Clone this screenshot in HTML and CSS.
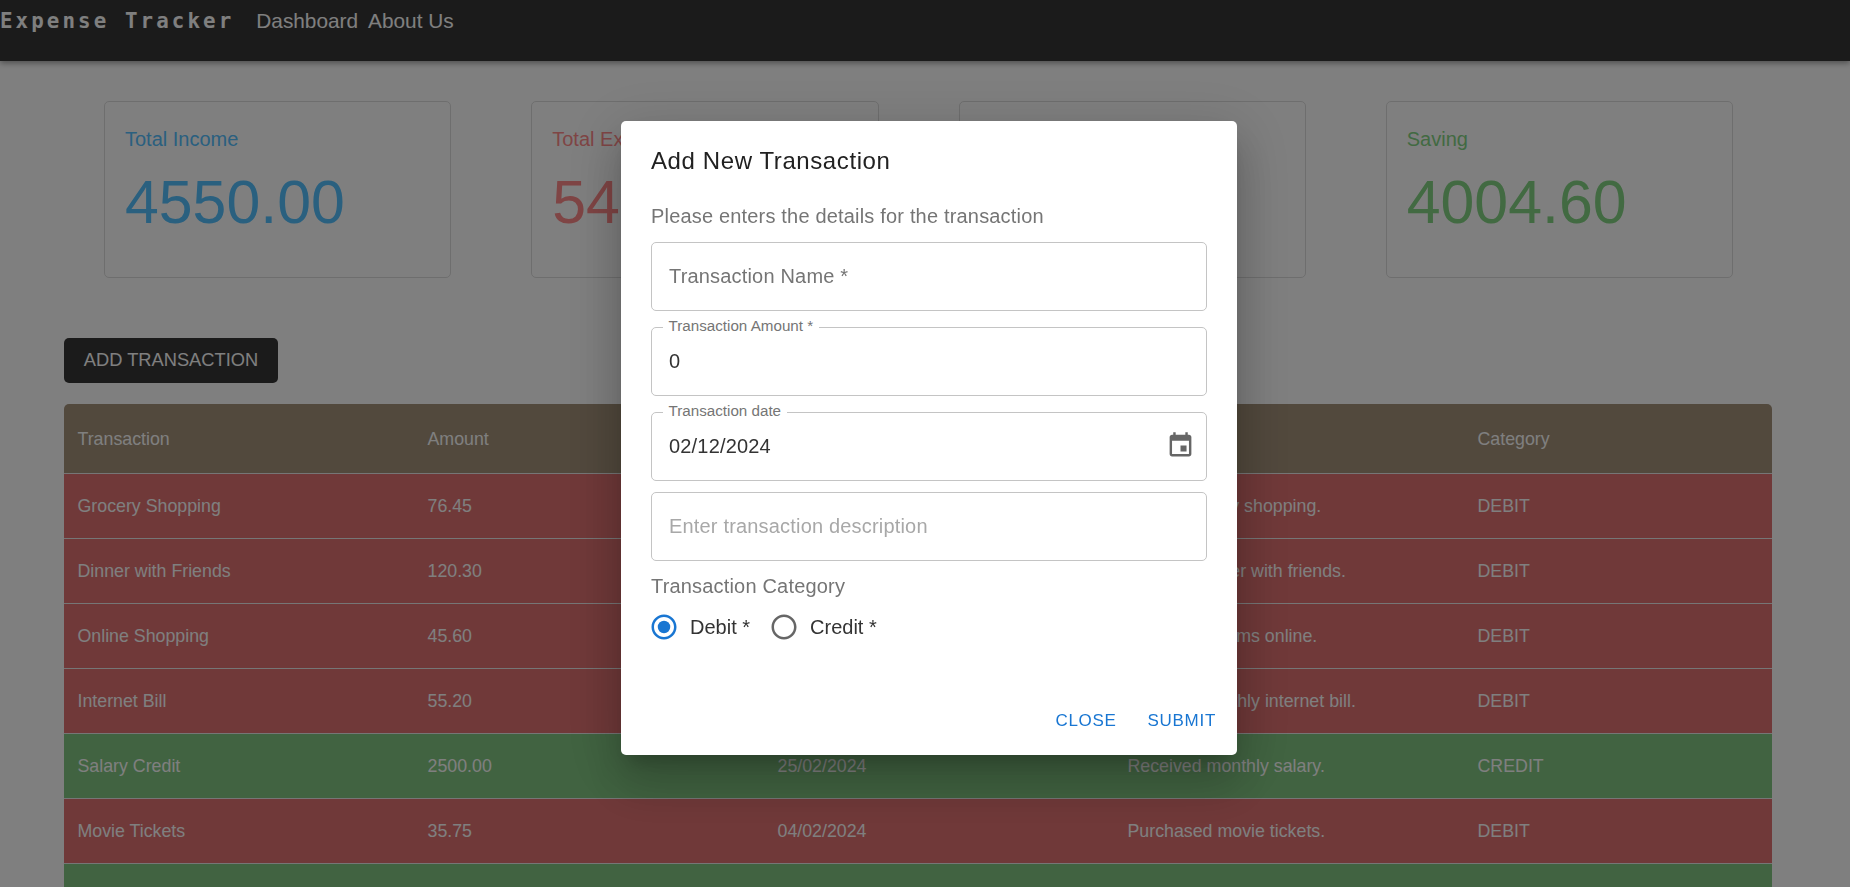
FILE: index.html
```html
<!DOCTYPE html>
<html lang="en">
<head>
    <meta charset="UTF-8">
    <meta name="viewport" content="width=device-width, initial-scale=1.0">
    <link rel="stylesheet" href="styles.css">
    <title>Expense Tracker</title>
</head>
<body>
    <nav class="navbar">
        <span class="brand">Expense Tracker</span>
        <a class="nav-link" href="#">Dashboard</a>
        <a class="nav-link" href="#">About Us</a>
    </nav>

    <section class="cards">
        <div class="card income">
            <div class="card-label">Total Income</div>
            <div class="card-value">4550.00</div>
        </div>
        <div class="card expense">
            <div class="card-label">Total Expense</div>
            <div class="card-value">545.40</div>
        </div>
        <div class="card">
            <div class="card-label">Budget</div>
            <div class="card-value">5000.00</div>
        </div>
        <div class="card saving">
            <div class="card-label">Saving</div>
            <div class="card-value">4004.60</div>
        </div>
    </section>

    <button class="add-btn">ADD TRANSACTION</button>

    <table class="tx-table">
        <thead>
            <tr>
                <th>Transaction</th>
                <th>Amount</th>
                <th>Date</th>
                <th>Description</th>
                <th>Category</th>
            </tr>
        </thead>
        <tbody>
            <tr class="debit"><td>Grocery Shopping</td><td>76.45</td><td>02/02/2024</td><td>Home grocery shopping.</td><td>DEBIT</td></tr>
            <tr class="debit"><td>Dinner with Friends</td><td>120.30</td><td>10/02/2024</td><td>Enjoyed dinner with friends.</td><td>DEBIT</td></tr>
            <tr class="debit"><td>Online Shopping</td><td>45.60</td><td>15/02/2024</td><td>Purchased items online.</td><td>DEBIT</td></tr>
            <tr class="debit"><td>Internet Bill</td><td>55.20</td><td>20/02/2024</td><td>Paid the monthly internet bill.</td><td>DEBIT</td></tr>
            <tr class="credit"><td>Salary Credit</td><td>2500.00</td><td>25/02/2024</td><td>Received monthly salary.</td><td>CREDIT</td></tr>
            <tr class="debit"><td>Movie Tickets</td><td>35.75</td><td>04/02/2024</td><td>Purchased movie tickets.</td><td>DEBIT</td></tr>
            <tr class="credit"><td></td><td></td><td></td><td></td><td></td></tr>
        </tbody>
    </table>

    <div class="backdrop"></div>

    <form class="dialog">
        <h2 class="dialog-title">Add New Transaction</h2>
        <p class="dialog-text">Please enters the details for the transaction</p>

        <div class="field">
            <input type="text" placeholder="Transaction Name *">
        </div>
        <div class="field">
            <label class="float-label">Transaction Amount *</label>
            <input type="text" value="0">
        </div>
        <div class="field">
            <label class="float-label">Transaction date</label>
            <input type="text" value="02/12/2024">
            <svg class="date-icon" viewBox="0 0 24 24"><path d="M17 12h-5v5h5v-5zM16 1v2H8V1H6v2H5c-1.11 0-1.99.9-1.99 2L3 19c0 1.1.89 2 2 2h14c1.1 0 2-.9 2-2V5c0-1.1-.9-2-2-2h-1V1h-2zm3 18H5V8h14v11z"/></svg>
        </div>
        <div class="field field-desc">
            <input class="light" type="text" placeholder="Enter transaction description">
        </div>

        <div class="group-label">Transaction Category</div>
        <div class="radios">
            <label class="radio">
                <svg class="checked" viewBox="0 0 24 24"><path d="M12 2C6.48 2 2 6.48 2 12s4.48 10 10 10 10-4.48 10-10S17.52 2 12 2zm0 18c-4.42 0-8-3.58-8-8s3.58-8 8-8 8 3.58 8 8-3.58 8-8 8z"/><circle cx="12" cy="12" r="5"/></svg>
                Debit *
            </label>
            <label class="radio">
                <svg viewBox="0 0 24 24"><path d="M12 2C6.48 2 2 6.48 2 12s4.48 10 10 10 10-4.48 10-10S17.52 2 12 2zm0 18c-4.42 0-8-3.58-8-8s3.58-8 8-8 8 3.58 8 8-3.58 8-8 8z"/></svg>
                Credit *
            </label>
        </div>

        <div class="dialog-actions">
            <button type="button" class="text-btn">CLOSE</button>
            <button type="button" class="text-btn">SUBMIT</button>
        </div>
    </form>
</body>
</html>
```

FILE: styles.css
```css
html,body{
    height: 100%;
}
body{
    margin: 0;
    background: #fff;
    font-family: "Liberation Sans", Arial, sans-serif;
    overflow: hidden;
}

/* navbar */
.navbar{
    display: flex;
    align-items: flex-start;
    height: 61px;
    box-sizing: border-box;
    padding-top: 8px;
    background: #363636;
    box-shadow: 0 2px 6px rgba(0,0,0,.4);
}
.brand{
    font-family: "DejaVu Sans Mono", monospace;
    font-weight: bold;
    font-size: 20.8px;
    line-height: 26px;
    letter-spacing: 3.1px;
    color: #fff;
    margin-right: 22px;
}
.nav-link{
    font-size: 20.8px;
    line-height: 26px;
    color: #fff;
    text-decoration: none;
    margin-right: 10px;
}

/* summary cards */
.cards{
    display: flex;
    gap: 80px;
    padding: 40px 117px 0 104px;
}
.card{
    flex: 1;
    height: 177px;
    box-sizing: border-box;
    padding: 26px 20px 0;
    border: 1px solid #ddd;
    border-radius: 5px;
}
.card-label{
    font-size: 20px;
    line-height: 23px;
}
.card-value{
    font-size: 60.8px;
    line-height: 69px;
    margin-top: 17px;
}
.income{
    color: #54c0ff;
}
.expense{
    color: #ff8a8a;
}
.saving{
    color: #84d484;
}

.add-btn{
    display: block;
    margin: 60px 0 0 64px;
    padding: 0 0 2px;
    width: 214px;
    height: 45px;
    background: #363636;
    color: #fff;
    border: none;
    border-radius: 5px;
    font-family: inherit;
    font-size: 18.3px;
}

/* transactions */
.tx-table{
    width: 1708px;
    margin: 21px 0 0 64px;
    table-layout: fixed;
    border-collapse: separate;
    border-spacing: 0;
    font-size: 17.8px;
    color: #fff;
}
.tx-table th,.tx-table td{
    width: 350px;
    padding: 0 0 0 13.5px;
    box-sizing: border-box;
    text-align: left;
    font-weight: normal;
    border-bottom: 1px solid #ececec;
}
.tx-table th:last-child,.tx-table td:last-child{
    width: 308px;
}
.tx-table th{
    height: 70px;
    padding-top: 2px;
    background: #a4927a;
}
.tx-table th:first-child{
    border-top-left-radius: 5px;
}
.tx-table th:last-child{
    border-top-right-radius: 5px;
}
.tx-table td{
    height: 65px;
}
.debit td{
    background: #e07272;
}
.credit td{
    background: #82c682;
}

.backdrop{
    position: fixed;
    top: 0;
    right: 0;
    bottom: 0;
    left: 0;
    background: rgba(0,0,0,.5);
}

/* add transaction dialog */
.dialog{
    position: fixed;
    top: 121px;
    left: 621px;
    width: 616px;
    height: 634px;
    box-sizing: border-box;
    padding: 24px 30px 0;
    display: flex;
    flex-direction: column;
    background: #fff;
    border-radius: 5px;
    box-shadow: 0 13px 18px -8px rgba(0,0,0,.2), 0 29px 46px 4px rgba(0,0,0,.14), 0 11px 55px 10px rgba(0,0,0,.12);
    font-family: "Liberation Sans", Arial, sans-serif;
}
.dialog-title{
    margin: 0;
    font-size: 24px;
    line-height: 32px;
    letter-spacing: .6px;
    font-weight: 400;
    color: #212121;
}
.dialog-text{
    margin: 28px 0 14px;
    font-size: 20px;
    line-height: 23px;
    letter-spacing: .18px;
    color: #757575;
}
.field{
    position: relative;
    margin-bottom: 16px;
}
.field-desc{
    margin-top: -5px;
    margin-bottom: 14px;
}
.field input{
    display: block;
    width: 100%;
    height: 69px;
    box-sizing: border-box;
    padding: 0 17px 1px;
    border: 1px solid #c4c4c4;
    border-radius: 5px;
    outline: none;
    font-family: inherit;
    font-size: 20px;
    letter-spacing: .18px;
    color: #333;
}
.field input::placeholder{
    color: #757575;
    opacity: 1;
}
.field input.light::placeholder{
    color: #a8a8a8;
}
.float-label{
    position: absolute;
    top: -10px;
    left: 11.5px;
    padding: 0 6px;
    background: #fff;
    font-size: 15.2px;
    line-height: 17px;
    color: #757575;
}
.date-icon{
    position: absolute;
    top: 19px;
    right: 12px;
    width: 29px;
    height: 29px;
    fill: #666;
}
.group-label{
    font-size: 20px;
    line-height: 23px;
    letter-spacing: .18px;
    color: #757575;
}
.radios{
    display: flex;
    gap: 19px;
    margin: 14px 0 0 -2px;
}
.radio{
    display: flex;
    align-items: center;
    gap: 11px;
    font-size: 20px;
    line-height: 30px;
    color: #333;
}
.radio svg{
    width: 30px;
    height: 30px;
    fill: #666;
}
.radio svg.checked{
    fill: #1976d2;
}
.dialog-actions{
    display: flex;
    justify-content: flex-end;
    gap: 31px;
    margin-top: 61px;
    margin-right: -9px;
}
.text-btn{
    padding: 6px 0;
    border: none;
    background: none;
    font-family: inherit;
    font-size: 17px;
    line-height: 24px;
    letter-spacing: .7px;
    color: #1976d2;
}
```
